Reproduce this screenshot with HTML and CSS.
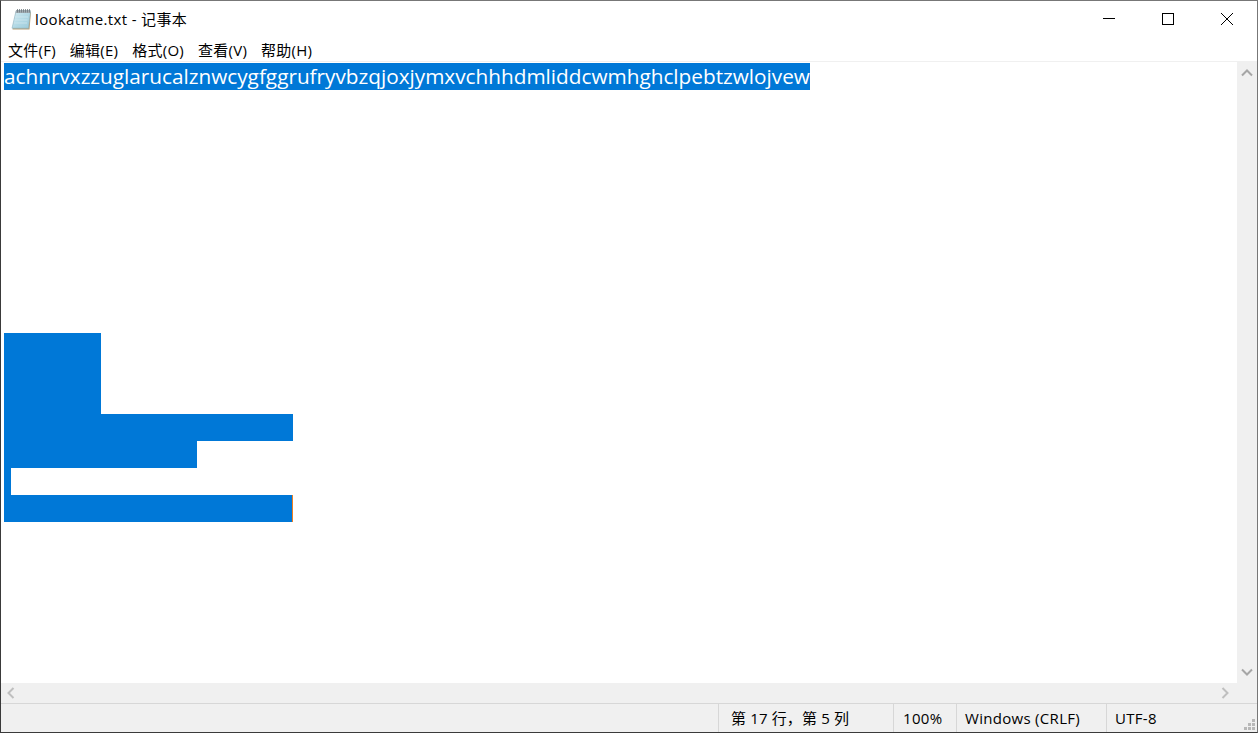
FILE: index.html
```html
<!DOCTYPE html>
<html lang="zh-CN">
<head>
<meta charset="utf-8">
<title>lookatme.txt - 记事本</title>
<link rel="stylesheet" href="styles.css">
</head>
<body>
<div class="window">
  <header class="titlebar">
    <svg class="app-icon" width="21" height="23" viewBox="0 0 21 23">
      <defs>
        <linearGradient id="pg" x1="0" y1="0" x2="1" y2="1">
          <stop offset="0" stop-color="#d8edf4"/>
          <stop offset="0.5" stop-color="#b4dae6"/>
          <stop offset="1" stop-color="#9ccbda"/>
        </linearGradient>
      </defs>
      <path d="M5 4 L20 4 L18.5 21.5 L1.5 21.5 Z" fill="#b8a078"/>
      <path d="M5 3 L19.5 3 L17.5 20.2 L1 20.2 Z" fill="url(#pg)" stroke="#8fb2c0" stroke-width="0.6"/>
      <path d="M5 2 L19.5 2 L19 5 L4.6 5 Z" fill="#a3adb3"/>
      <path d="M6.5 1 V4.5 M8.5 1 V4.5 M10.5 1 V4.5 M12.5 1 V4.5 M14.5 1 V4.5 M16.5 1 V4.5 M18.5 1 V4.5" stroke="#6d787e" stroke-width="0.8"/>
      <path d="M4 9 H17 M3.5 12 H16.5 M3 15 H16" stroke="#cfe7ef" stroke-width="0.8"/>
    </svg>
    <span class="title">lookatme.txt - 记事本</span>
    <div class="controls">
      <button class="ctl"><svg width="12" height="12" viewBox="0 0 12 12"><path d="M0 5.5 H12" stroke="#000" fill="none"/></svg></button>
      <button class="ctl"><svg width="12" height="12" viewBox="0 0 12 12"><rect x="0.5" y="0.5" width="11" height="11" stroke="#000" fill="none"/></svg></button>
      <button class="ctl"><svg width="12" height="12" viewBox="0 0 12 12"><path d="M0 0 L12 12 M12 0 L0 12" stroke="#000" fill="none"/></svg></button>
    </div>
  </header>
  <nav class="menubar">
    <span class="menu-item">文件(F)</span>
    <span class="menu-item">编辑(E)</span>
    <span class="menu-item">格式(O)</span>
    <span class="menu-item">查看(V)</span>
    <span class="menu-item">帮助(H)</span>
  </nav>
  <div class="middle">
    <main class="editor">
      <div class="line text-line"><span class="sel">achnrvxzzuglarucalznwcygfggrufryvbzqjoxjymxvchhhdmliddcwmhghclpebtzwlojvew</span></div>
      <div class="gap"></div>
      <div class="block w97 tall"></div>
      <div class="block w289"></div>
      <div class="block w193"></div>
      <div class="block w7"></div>
      <div class="block w289 caret"></div>
    </main>
    <aside class="vscroll">
      <svg width="12" height="8" viewBox="0 0 12 8"><path d="M1 6.5 L6 1.5 L11 6.5" stroke="#a6a6a6" stroke-width="2" fill="none"/></svg>
      <svg width="12" height="8" viewBox="0 0 12 8"><path d="M1 1.5 L6 6.5 L11 1.5" stroke="#a6a6a6" stroke-width="2" fill="none"/></svg>
    </aside>
  </div>
  <div class="hscroll">
    <svg width="8" height="12" viewBox="0 0 8 12"><path d="M6.5 1 L1.5 6 L6.5 11" stroke="#bfbfbf" stroke-width="2" fill="none"/></svg>
    <svg width="8" height="12" viewBox="0 0 8 12"><path d="M1.5 1 L6.5 6 L1.5 11" stroke="#bfbfbf" stroke-width="2" fill="none"/></svg>
  </div>
  <footer class="statusbar">
    <div class="cell c-flex"></div>
    <div class="cell c-pos">第 17 行，第 5 列</div>
    <div class="cell c-zoom">100%</div>
    <div class="cell c-eol">Windows (CRLF)</div>
    <div class="cell c-enc">UTF-8</div>
    <svg class="grip" width="12" height="12" viewBox="0 0 12 12" fill="#b8b8b8">
      <rect x="8" y="0" width="3" height="3"/>
      <rect x="4" y="4" width="3" height="3"/><rect x="8" y="4" width="3" height="3"/>
      <rect x="0" y="8" width="3" height="3"/><rect x="4" y="8" width="3" height="3"/><rect x="8" y="8" width="3" height="3"/>
    </svg>
  </footer>
</div>
</body>
</html>
```
FILE: styles.css
```css
* { box-sizing: border-box; }
html, body { margin: 0; height: 100%; overflow: hidden; background: #fff; }
body { font-family: "Open Sans", "Noto Sans CJK SC", sans-serif; color: #000; }

.window {
  width: 1258px;
  height: 733px;
  display: flex;
  flex-direction: column;
  border-left: 1px solid #3a3a3a;
  border-top: 1px solid #777;
  border-right: 1px solid #777;
  border-bottom: 1px solid #3a3a3a;
}

.titlebar {
  height: 37px;
  flex: none;
  display: flex;
  align-items: center;
  padding-left: 10px;
  background: #fff;
}
.app-icon { flex: none; margin-top: -1px; }
.title {
  margin-left: 3px;
  font-size: 15px;
  letter-spacing: 0.35px;
  margin-top: -3px;
  white-space: nowrap;
}
.controls { margin-left: auto; display: flex; margin-top: -1px; padding-right: 1px; }
.ctl {
  width: 59px;
  height: 36px;
  padding: 0;
  border: 0;
  background: transparent;
  display: flex;
  align-items: center;
  justify-content: center;
}

.menubar {
  height: 24px;
  flex: none;
  display: flex;
  padding-left: 7px;
  gap: 14px;
  align-items: center;
  font-size: 15px;
  letter-spacing: 0.25px;
  border-bottom: 1px solid #f0f0f0;
  background: #fff;
}
.menu-item { white-space: nowrap; }

.middle { flex: 1; display: flex; min-height: 0; }
.editor { flex: 1; padding: 1px 0 0 3px; overflow: hidden; background: #fff; }
.line { height: 27px; }
.text-line {
  font-size: 20.75px;
  line-height: 27px;
  white-space: nowrap;
}
.sel { display: inline-block; width: 806px; height: 27px; background: #0078d7; color: #fff; }
.gap { height: 243px; }
.block { height: 27px; background: #0078d7; }
.tall { height: 81px; }
.w97 { width: 97px; }
.w193 { width: 193px; }
.w289 { width: 289px; }
.w7 { width: 7px; }
.caret { border-right: 1px solid #f08020; }

.vscroll {
  width: 20px;
  flex: none;
  background: #f0f0f0;
  display: flex;
  flex-direction: column;
  justify-content: space-between;
  align-items: center;
  padding: 7px 0;
}
.hscroll {
  height: 20px;
  flex: none;
  background: #f0f0f0;
  display: flex;
  justify-content: space-between;
  align-items: center;
  padding: 0 28px 0 6px;
}

.statusbar {
  height: 29px;
  flex: none;
  position: relative;
  display: flex;
  background: #f0f0f0;
  border-top: 1px solid #d7d7d7;
  font-size: 15px;
  letter-spacing: 0.3px;
  line-height: 29px;
  white-space: nowrap;
}
.cell { padding-left: 12px; }
.cell + .cell { border-left: 1px solid #d7d7d7; }
.c-flex { width: 717px; padding: 0; flex: none; }
.c-pos { width: 175px; letter-spacing: 0.15px; }
.c-zoom { width: 63px; padding-left: 9px; }
.c-eol { width: 150px; padding-left: 8px; }
.c-enc { flex: 1; padding-left: 8px; }
.grip { position: absolute; right: 1px; bottom: 1px; }
```
